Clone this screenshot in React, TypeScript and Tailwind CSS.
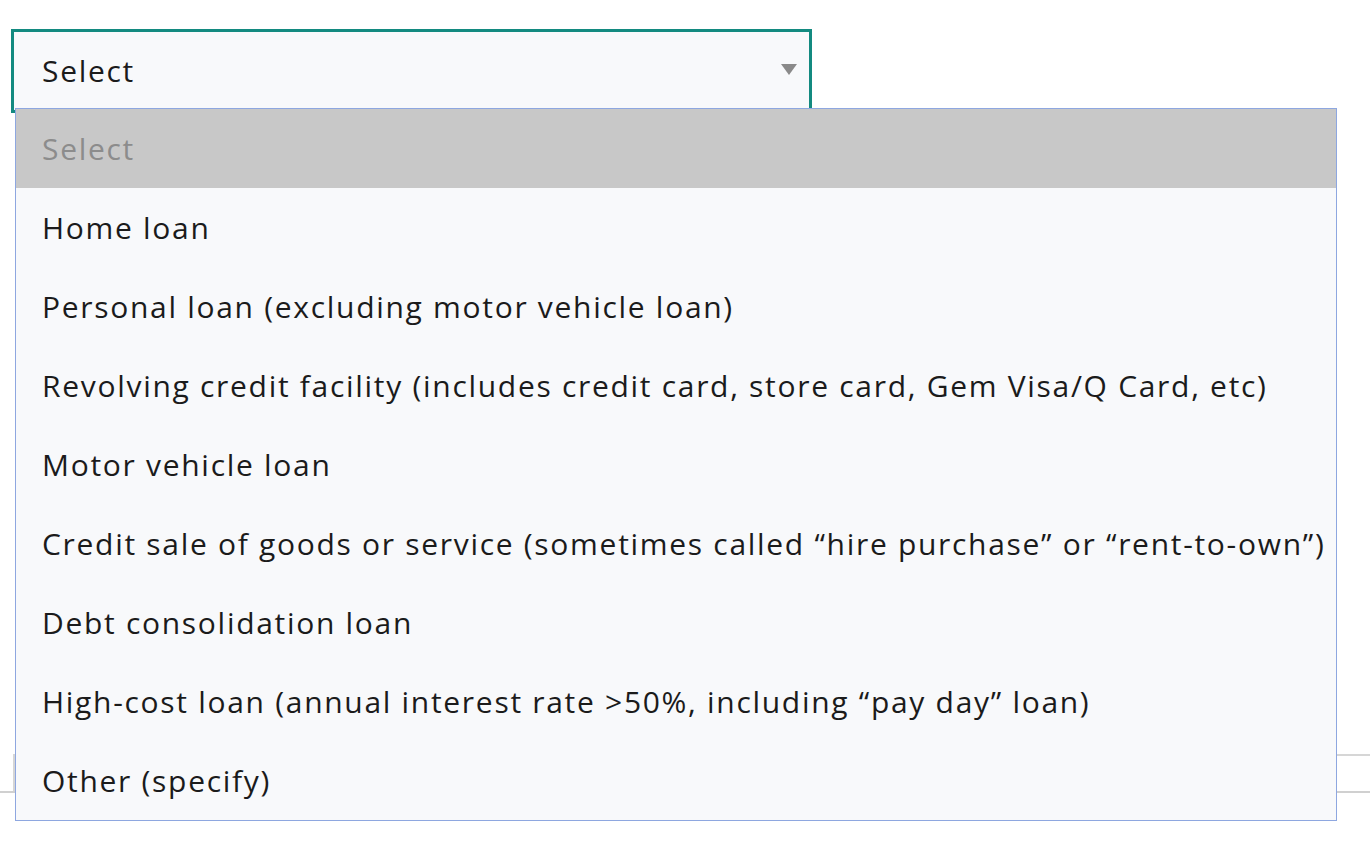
const options = [
  "Home loan",
  "Personal loan (excluding motor vehicle loan)",
  "Revolving credit facility (includes credit card, store card, Gem Visa/Q Card, etc)",
  "Motor vehicle loan",
  "Credit sale of goods or service (sometimes called \u201chire purchase\u201d or \u201crent-to-own\u201d)",
  "Debt consolidation loan",
  "High-cost loan (annual interest rate >50%, including \u201cpay day\u201d loan)",
  "Other (specify)",
];

export default function App() {
  return (
    <div
      className="relative w-[1370px] h-[847px] overflow-hidden bg-white text-[#1b1b1b] tracking-[1.7px]"
      style={{ fontFamily: "'Open Sans', Lato, sans-serif" }}
    >
      {/* form behind the open list */}
      <div className="pt-[29px] pl-[11px]">
        <div className="flex items-center justify-between w-[801px] h-[84px] border-[3px] border-[#138a80] bg-[#f8f9fb] pl-[28px] pr-[11px]">
          <span className="text-[30px] leading-none">Select</span>
          <svg width="18" height="13" viewBox="0 0 18 13" className="mt-[-4px]">
            <path d="M1 1h16L9 12z" fill="#8a8a8a" />
          </svg>
        </div>
        <div className="mt-[641px] ml-[2px] h-[39px] border-t-2 border-l-2 border-[#d6d6d6]" />
      </div>
      <div className="h-[2px] bg-[#d0d0d0] mt-[-2px]" />

      {/* open list */}
      <ul className="absolute left-[15px] top-[108px] w-[1322px] border border-[#8ea7e0] bg-[#f8f9fb]">
        <li className="flex items-center h-[79px] pl-[26px] bg-[#c8c8c8] text-[#8c8c8c] text-[30px] whitespace-nowrap">
          Select
        </li>
        {options.map((o) => (
          <li
            key={o}
            className="flex items-center h-[79px] pl-[26px] text-[30px] whitespace-nowrap"
          >
            {o}
          </li>
        ))}
      </ul>
    </div>
  );
}
